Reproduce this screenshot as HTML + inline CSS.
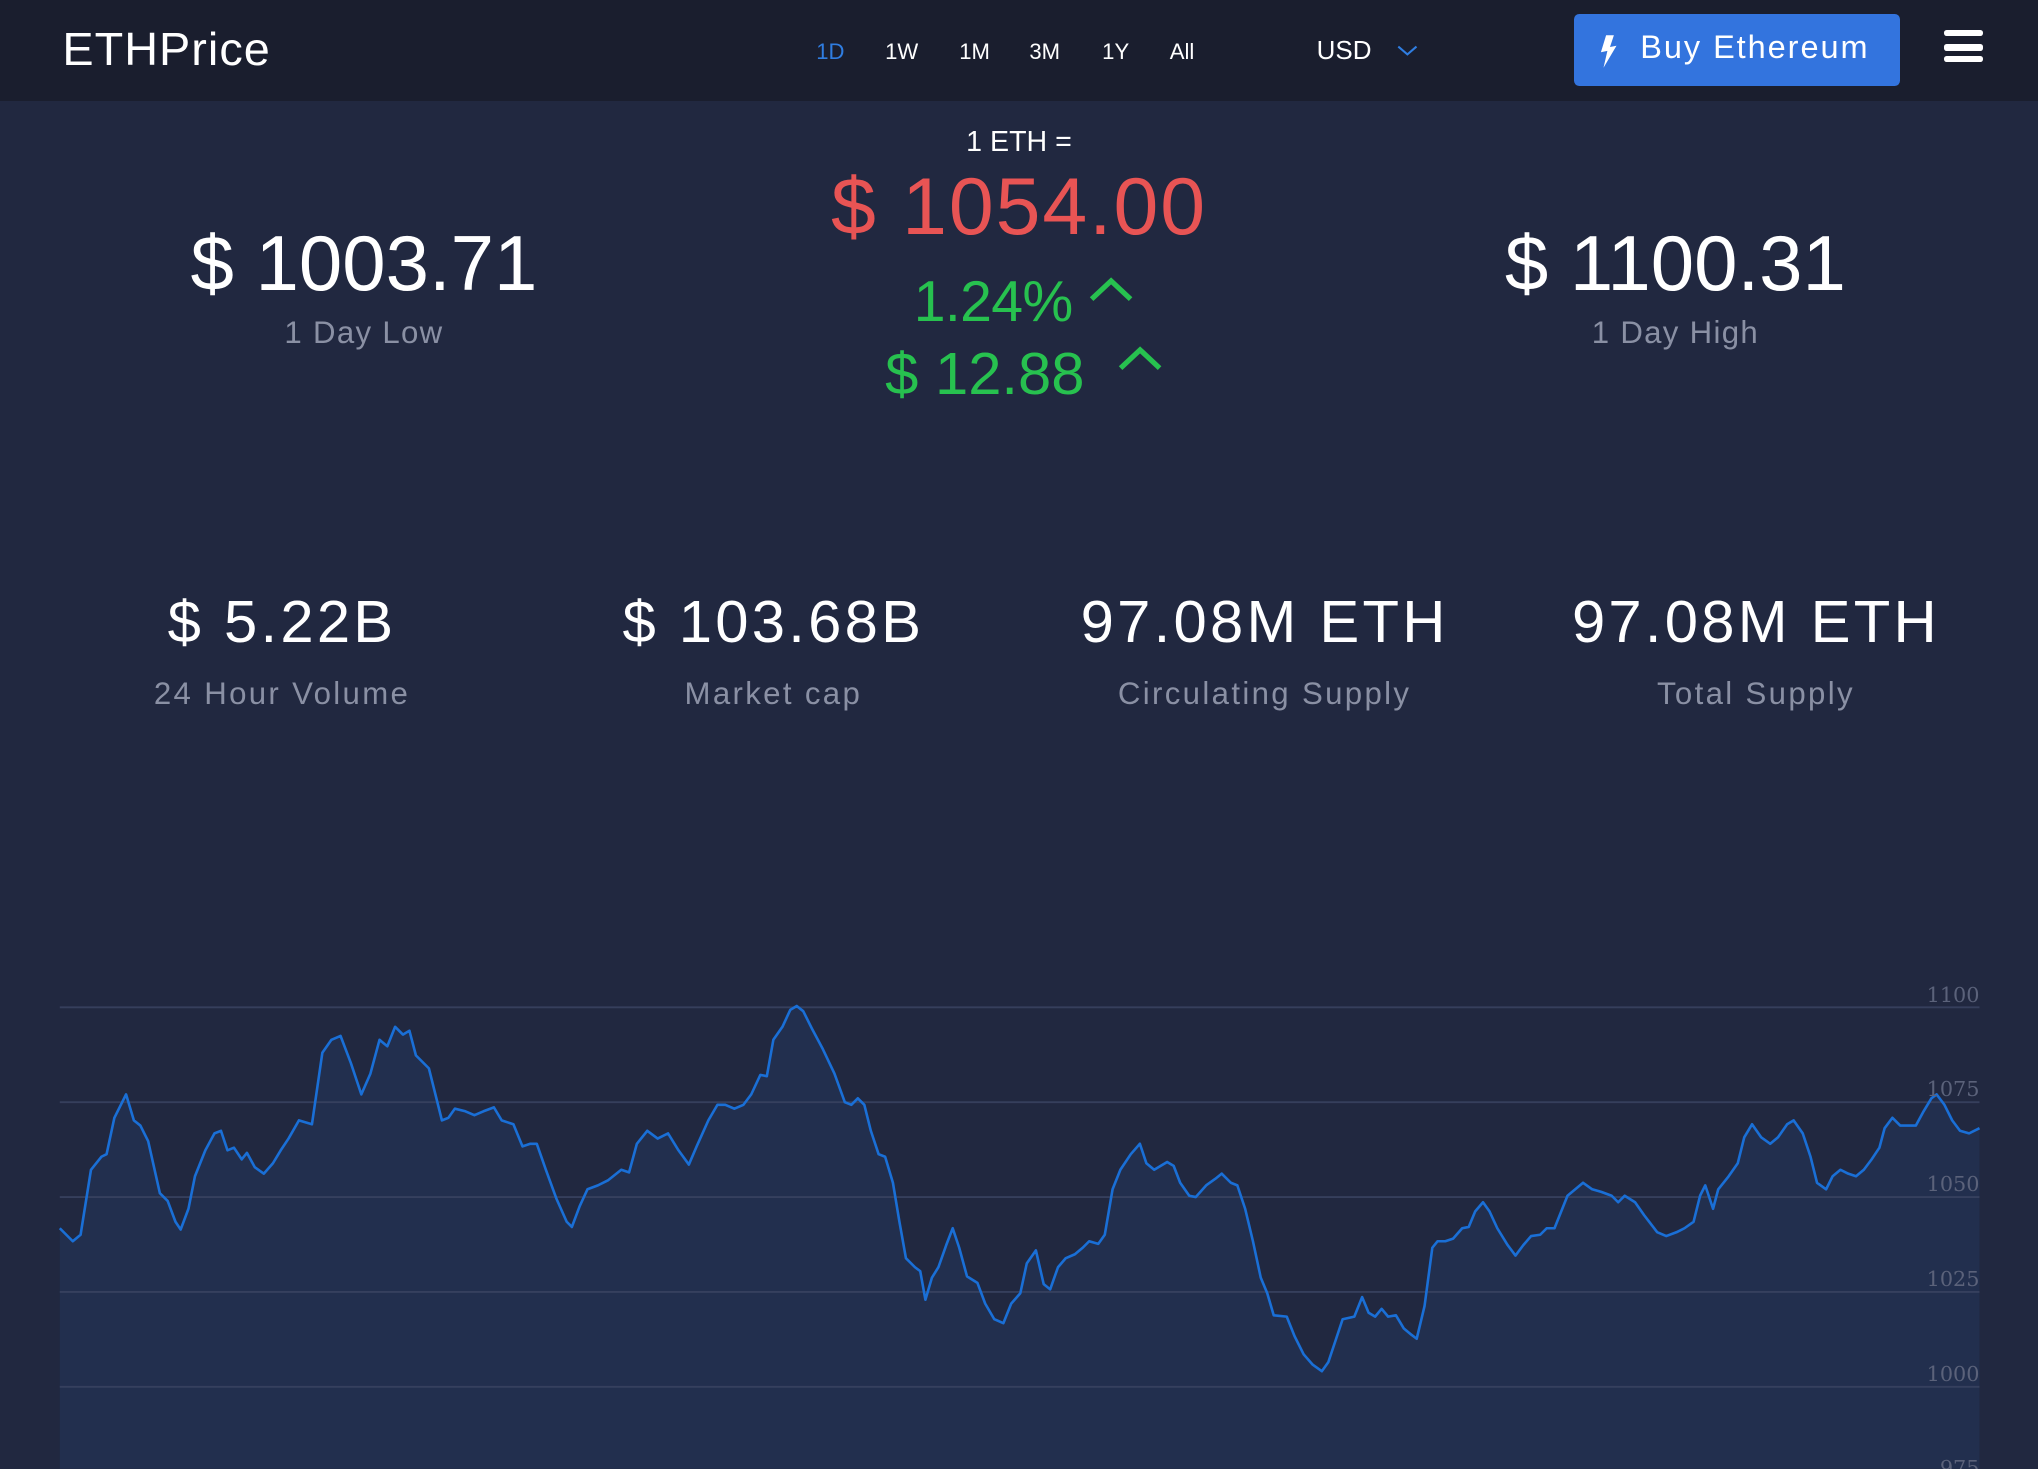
<!DOCTYPE html>
<html><head><meta charset="utf-8"><style>
html,body{margin:0;padding:0;background:#212840;overflow:hidden}
#w{width:1568px;height:1130px;position:relative;zoom:1.29974;font-family:"Liberation Sans",sans-serif;color:#fff;background:#212840}
.a{position:absolute;white-space:nowrap}
.c{transform:translateX(-50%);text-align:center}
#hdr{position:absolute;left:0;top:0;width:1568px;height:78px;background:#1a1e2e}
.nav{font-size:17px;top:30px}
.big{font-size:60px;font-weight:300;letter-spacing:0px}
.lbl{font-size:24px;color:#8a90a4;letter-spacing:1px}
.sv{font-size:46px;top:452px;letter-spacing:2.5px}
.sl{font-size:24px;color:#8a90a4;top:520px;letter-spacing:1.8px}
.gl{font-family:"DejaVu Serif","Liberation Serif",serif;font-size:16px;color:#5b627a;right:45px}
</style></head><body><div id="w">
<div id="hdr"></div>
<div class="a" style="left:48px;top:17px;font-size:36px;letter-spacing:0.8px">ETHPrice</div>
<div class="a nav" style="left:628px;color:#2f7de1">1D</div>
<div class="a nav" style="left:681px">1W</div>
<div class="a nav" style="left:738px">1M</div>
<div class="a nav" style="left:792px">3M</div>
<div class="a nav" style="left:848px">1Y</div>
<div class="a nav" style="left:900px">All</div>
<div class="a" style="left:1013px;top:27px;font-size:20px">USD</div>
<svg class="a" style="left:1075px;top:34px" width="16" height="10"><path d="M1 2 L8 8 L15 2" stroke="#2f7de1" stroke-width="1.6" fill="none"/></svg>
<div class="a" style="left:1211px;top:11px;width:251px;height:55px;background:#3374de;border-radius:4px"></div>
<svg class="a" style="left:1229px;top:26px" width="18" height="28"><path d="M7 1 L3 14 L8 13 L5 26 L15 9 L10 10 L13 1 Z" fill="#fff"/></svg>
<div class="a" style="left:1262px;top:22px;font-size:25px;letter-spacing:1.5px">Buy Ethereum</div>
<div class="a" style="left:1496px;top:23px;width:30px;height:5px;background:#fff;border-radius:2px"></div>
<div class="a" style="left:1496px;top:34px;width:30px;height:5px;background:#fff;border-radius:2px"></div>
<div class="a" style="left:1496px;top:43px;width:30px;height:5px;background:#fff;border-radius:2px"></div>

<div class="a c" style="left:784px;top:97px;font-size:22px">1 ETH =</div>
<div class="a c big" style="left:784px;top:124px;color:#e85454;font-size:62px;letter-spacing:1.5px">$ 1054.00</div>
<div class="a" style="left:703px;top:207px;font-size:44px;color:#27c14f;letter-spacing:-0.5px">1.24%</div>
<svg class="a" style="left:838px;top:213px" width="34" height="20"><path d="M2 17 L17 3 L32 17" stroke="#27c14f" stroke-width="4" fill="none"/></svg>
<div class="a" style="left:681px;top:261px;font-size:46px;color:#27c14f">$ 12.88</div>
<svg class="a" style="left:860px;top:266px" width="34" height="20"><path d="M2 17 L17 3 L32 17" stroke="#27c14f" stroke-width="4" fill="none"/></svg>

<div class="a c big" style="left:280px;top:168px">$ 1003.71</div>
<div class="a c lbl" style="left:280px;top:242px">1 Day Low</div>
<div class="a c big" style="left:1289px;top:168px">$ 1100.31</div>
<div class="a c lbl" style="left:1289px;top:242px">1 Day High</div>

<div class="a c sv" style="left:217px">$ 5.22B</div>
<div class="a c sl" style="left:217px">24 Hour Volume</div>
<div class="a c sv" style="left:595px">$ 103.68B</div>
<div class="a c sl" style="left:595px">Market cap</div>
<div class="a c sv" style="left:973px">97.08M ETH</div>
<div class="a c sl" style="left:973px">Circulating Supply</div>
<div class="a c sv" style="left:1351px">97.08M ETH</div>
<div class="a c sl" style="left:1351px">Total Supply</div>

<svg class="a" style="left:0;top:0" width="1568" height="1130">
<path fill="#222f4e" d="M46,945 L56,955 L62,950 L70,900 L78,890 L82,888 L88,860 L97,842 L103,862 L108,866 L114,878 L123,918 L129,924 L135,940 L139,946 L145,930 L150,905 L158,885 L165,872 L170,870 L175,885 L180,883 L186,892 L190,887 L196,898 L203,903 L210,895 L216,885 L222,876 L230,862 L240,865 L248,810 L255,800 L262,797 L270,818 L278,842 L285,826 L292,800 L298,805 L304,790 L310,796 L315,793 L320,812 L330,822 L340,862 L345,860 L350,853 L358,855 L365,858 L372,855 L380,852 L386,862 L395,865 L402,882 L408,880 L413,880 L420,900 L428,922 L436,940 L440,944 L446,928 L452,915 L460,912 L468,908 L478,900 L484,902 L490,880 L498,870 L506,876 L514,872 L522,885 L530,896 L536,882 L545,862 L552,850 L558,850 L565,853 L572,850 L578,842 L585,827 L590,828 L595,800 L602,790 L608,777 L613,774 L618,778 L625,792 L633,807 L642,826 L650,848 L655,850 L660,845 L665,850 L670,870 L676,888 L681,890 L687,910 L692,940 L697,968 L704,975 L708,978 L712,1000 L717,983 L722,975 L728,958 L733,945 L738,960 L744,982 L752,987 L758,1003 L765,1015 L772,1018 L778,1003 L785,995 L790,972 L797,962 L803,988 L808,992 L814,975 L820,968 L827,965 L833,960 L838,955 L845,957 L850,950 L856,915 L862,900 L870,888 L877,880 L882,895 L888,900 L893,897 L898,894 L903,897 L908,910 L915,920 L920,921 L928,912 L935,907 L940,903 L947,910 L952,912 L958,930 L964,955 L970,983 L975,995 L980,1012 L990,1013 L996,1028 L1003,1042 L1010,1050 L1017,1055 L1022,1048 L1028,1030 L1033,1015 L1042,1013 L1048,998 L1053,1010 L1058,1013 L1063,1007 L1068,1013 L1074,1012 L1080,1022 L1086,1027 L1090,1030 L1096,1005 L1102,960 L1106,955 L1112,955 L1118,953 L1125,945 L1130,944 L1135,932 L1141,925 L1146,932 L1152,945 L1160,958 L1166,966 L1172,958 L1178,951 L1185,950 L1190,945 L1196,945 L1200,935 L1206,920 L1212,915 L1218,910 L1225,915 L1232,917 L1240,920 L1245,925 L1250,920 L1258,925 L1265,935 L1275,948 L1282,951 L1290,948 L1296,945 L1303,940 L1308,920 L1312,912 L1318,930 L1322,915 L1330,905 L1337,895 L1342,875 L1348,865 L1355,875 L1362,880 L1368,875 L1375,865 L1380,862 L1387,872 L1393,890 L1398,910 L1405,915 L1410,905 L1416,900 L1422,903 L1428,905 L1434,900 L1440,892 L1446,883 L1450,868 L1456,860 L1462,866 L1468,866 L1474,866 L1480,855 L1486,845 L1490,842 L1496,850 L1502,862 L1508,870 L1515,872 L1523,868 L1523,1130 L46,1130 Z"/>
<g stroke="#394260" stroke-width="1.5" opacity="0.9">
<line x1="46" y1="775" x2="1523" y2="775"/><line x1="46" y1="848" x2="1523" y2="848"/><line x1="46" y1="921" x2="1523" y2="921"/><line x1="46" y1="994" x2="1523" y2="994"/><line x1="46" y1="1067" x2="1523" y2="1067"/></g>
<path fill="none" stroke="#1a6fd6" stroke-width="2" stroke-linejoin="round" d="M46,945 L56,955 L62,950 L70,900 L78,890 L82,888 L88,860 L97,842 L103,862 L108,866 L114,878 L123,918 L129,924 L135,940 L139,946 L145,930 L150,905 L158,885 L165,872 L170,870 L175,885 L180,883 L186,892 L190,887 L196,898 L203,903 L210,895 L216,885 L222,876 L230,862 L240,865 L248,810 L255,800 L262,797 L270,818 L278,842 L285,826 L292,800 L298,805 L304,790 L310,796 L315,793 L320,812 L330,822 L340,862 L345,860 L350,853 L358,855 L365,858 L372,855 L380,852 L386,862 L395,865 L402,882 L408,880 L413,880 L420,900 L428,922 L436,940 L440,944 L446,928 L452,915 L460,912 L468,908 L478,900 L484,902 L490,880 L498,870 L506,876 L514,872 L522,885 L530,896 L536,882 L545,862 L552,850 L558,850 L565,853 L572,850 L578,842 L585,827 L590,828 L595,800 L602,790 L608,777 L613,774 L618,778 L625,792 L633,807 L642,826 L650,848 L655,850 L660,845 L665,850 L670,870 L676,888 L681,890 L687,910 L692,940 L697,968 L704,975 L708,978 L712,1000 L717,983 L722,975 L728,958 L733,945 L738,960 L744,982 L752,987 L758,1003 L765,1015 L772,1018 L778,1003 L785,995 L790,972 L797,962 L803,988 L808,992 L814,975 L820,968 L827,965 L833,960 L838,955 L845,957 L850,950 L856,915 L862,900 L870,888 L877,880 L882,895 L888,900 L893,897 L898,894 L903,897 L908,910 L915,920 L920,921 L928,912 L935,907 L940,903 L947,910 L952,912 L958,930 L964,955 L970,983 L975,995 L980,1012 L990,1013 L996,1028 L1003,1042 L1010,1050 L1017,1055 L1022,1048 L1028,1030 L1033,1015 L1042,1013 L1048,998 L1053,1010 L1058,1013 L1063,1007 L1068,1013 L1074,1012 L1080,1022 L1086,1027 L1090,1030 L1096,1005 L1102,960 L1106,955 L1112,955 L1118,953 L1125,945 L1130,944 L1135,932 L1141,925 L1146,932 L1152,945 L1160,958 L1166,966 L1172,958 L1178,951 L1185,950 L1190,945 L1196,945 L1200,935 L1206,920 L1212,915 L1218,910 L1225,915 L1232,917 L1240,920 L1245,925 L1250,920 L1258,925 L1265,935 L1275,948 L1282,951 L1290,948 L1296,945 L1303,940 L1308,920 L1312,912 L1318,930 L1322,915 L1330,905 L1337,895 L1342,875 L1348,865 L1355,875 L1362,880 L1368,875 L1375,865 L1380,862 L1387,872 L1393,890 L1398,910 L1405,915 L1410,905 L1416,900 L1422,903 L1428,905 L1434,900 L1440,892 L1446,883 L1450,868 L1456,860 L1462,866 L1468,866 L1474,866 L1480,855 L1486,845 L1490,842 L1496,850 L1502,862 L1508,870 L1515,872 L1523,868"/>
</svg>
<div class="a gl" style="top:756px">1100</div>
<div class="a gl" style="top:829px">1075</div>
<div class="a gl" style="top:902px">1050</div>
<div class="a gl" style="top:975px">1025</div>
<div class="a gl" style="top:1048px">1000</div>
<div class="a gl" style="top:1120px">975</div>
</div></body></html>
